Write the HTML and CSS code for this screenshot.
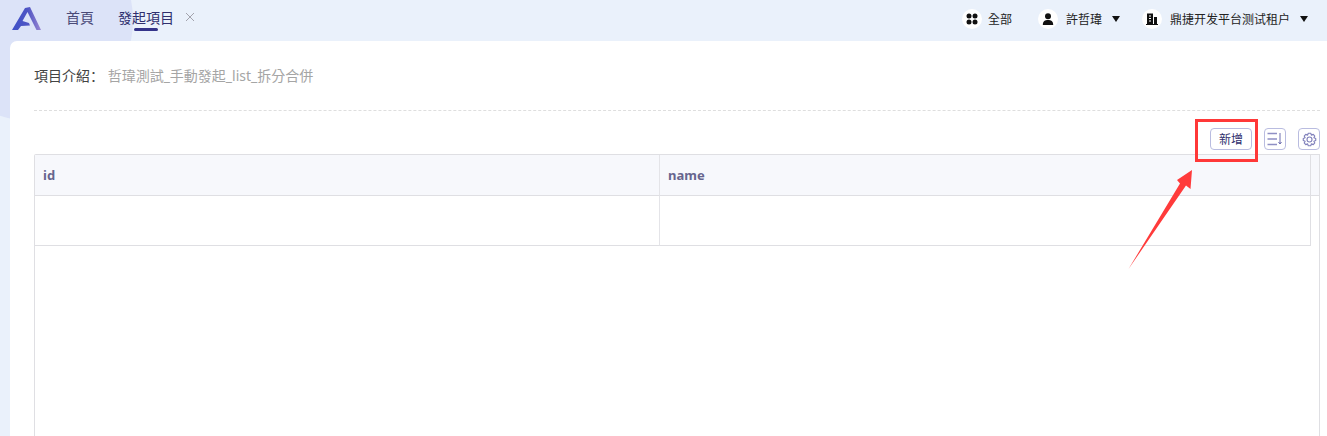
FILE: index.html
```html
<!DOCTYPE html>
<html lang="zh-Hant">
<head>
<meta charset="utf-8">
<title>發起項目</title>
<link rel="stylesheet" href="styles.css">
</head>
<body>
<div class="blob"></div>
<header class="topbar">
  <div class="left">
    <svg class="logo" width="32" height="27" viewBox="0 0 32 27">
      <defs><linearGradient id="lg" x1="0" x2="1" y1="0" y2="0"><stop offset="0" stop-color="#3f51c8"/><stop offset="0.55" stop-color="#4f55c4"/><stop offset="1" stop-color="#9a86d2"/></linearGradient></defs>
      <path d="M2 25 L15 3 L20 2 L31 25 L26.500 25 L17.500 7 L12.500 16 L19 18 L20 20.500 L11 21 L8 25 Z" fill="url(#lg)"/>
    </svg>
    <nav class="tabs">
      <span class="tab">首頁</span>
      <span class="tab active">發起項目</span>
      <svg class="close" width="10" height="10" viewBox="0 0 10 10"><path d="M1 1 L9 9 M9 1 L1 9" stroke="#a3a3ad" stroke-width="1" fill="none"/></svg>
    </nav>
  </div>
  <div class="right">
    <div class="item">
      <span class="circle"><svg width="12" height="12" viewBox="0 0 12 12"><circle cx="3" cy="3" r="2.500"/><circle cx="9" cy="3" r="2.500"/><circle cx="3" cy="9" r="2.500"/><circle cx="9" cy="9" r="2.500"/></svg></span>
      <span class="label">全部</span>
    </div>
    <div class="item user">
      <span class="circle wide"><svg width="12" height="12" viewBox="0 0 12 12"><circle cx="6" cy="3.200" r="3"/><path d="M0.800 12 C0.800 8 3 7 6 7 C9 7 11.200 8 11.200 12 Z"/></svg></span>
      <span class="label">許哲瑋</span><span class="caret"></span>
    </div>
    <div class="item tenant">
      <span class="circle wide"><svg width="12" height="12" viewBox="0 0 12 12"><path d="M1 0.500 H7 V11 H1 Z M8 4 H11 V11 H8 Z" /><path d="M3 3 H5 M3 5.500 H5 M3 8 H5" stroke="#fff" stroke-width="1"/><path d="M0 11.500 H12" stroke="#111" stroke-width="1"/></svg></span>
      <span class="label">鼎捷开发平台测试租户</span><span class="caret"></span>
    </div>
  </div>
</header>
<main class="card">
  <div class="intro">
    <span class="intro-label" lang="zh-Hans">項目介紹：</span>
    <span class="intro-value">哲瑋測試_手動發起_list_拆分合併</span>
  </div>
  <div class="toolbar">
    <button class="add-btn">新增</button>
    <button class="icon-btn"><svg width="16" height="14" viewBox="0 0 16 14"><path d="M0.500 1.500 H10 M0.500 7 H10 M0.500 12.500 H10" stroke="#8f8fc4" stroke-width="1.500" fill="none"/><path d="M13 1 V12 M11.500 10 L13 12 L14.500 10" stroke="#6e6eb0" stroke-width="1" fill="none"/></svg></button>
    <button class="icon-btn"><svg width="15" height="15" viewBox="0 0 24 24" fill="none" stroke="#8080bb" stroke-width="1.800" stroke-linejoin="round"><path d="M10 2 H14 L15 5 L18 3.800 L20.500 6.500 L19 9.300 L22 10.500 V13.500 L19 14.700 L20.500 17.500 L18 20.200 L15 19 L14 22 H10 L9 19 L6 20.200 L3.500 17.500 L5 14.700 L2 13.500 V10.500 L5 9.300 L3.500 6.500 L6 3.800 L9 5 Z"/><circle cx="12" cy="12" r="4"/></svg></button>
  </div>
  <div class="table">
    <div class="grid">
      <div class="th">id</div>
      <div class="th">name</div>
      <div class="td"></div>
      <div class="td"></div>
    </div>
    <div class="gutter"></div>
  </div>
</main>
<div class="red-box"></div>
<svg class="arrow" width="70" height="105" viewBox="0 0 70 105"><path d="M0.500 101 L52 15.500 L49 12 L64 2 L62.500 21 L58 17.500 Z" fill="#ff3b3b"/></svg>
</body>
</html>
```
FILE: styles.css
```css
* { box-sizing: border-box; }
html, body { margin: 0; height: 100%; overflow: hidden; }
body {
  position: relative;
  width: 1327px;
  height: 436px;
  background: #eaf1fb;
  font-family: "Noto Sans", "Noto Sans CJK TC", sans-serif;
  display: flex;
  flex-direction: column;
}
.blob {
  position: absolute;
  left: -69px;
  top: -81px;
  width: 202px;
  height: 202px;
  border-radius: 50%;
  background: #dce3f8;
}
.topbar {
  position: relative;
  height: 41px;
  flex: none;
  display: flex;
  justify-content: space-between;
}
.left { display: flex; align-items: flex-start; }
.logo { margin: 5px 0 0 10px; }
.tabs { display: flex; align-items: flex-start; margin-left: 24px; }
.tab {
  position: relative;
  font-size: 14px;
  line-height: 20px;
  padding-top: 8px;
  color: #4a4a78;
  margin-right: 24px;
}
.tab.active { color: #2f2f6e; margin-right: 0; }
.tab.active::after {
  content: "";
  position: absolute;
  left: 16px;
  top: 28px;
  width: 24px;
  height: 3px;
  border-radius: 2px;
  background: #34348a;
}
.close { margin: 12px 0 0 11px; }
.right {
  display: flex;
  align-items: flex-start;
  padding-top: 9px;
  padding-right: 19px;
  font-size: 12px;
  line-height: 20px;
  color: #222;
}
.item { display: flex; align-items: center; height: 20px; }
.label { padding-top: 1px; }
.user { margin-left: 26px; }
.tenant { margin-left: 22px; }
.circle {
  width: 20px;
  height: 20px;
  border-radius: 50%;
  background: #fff;
  display: flex;
  align-items: center;
  justify-content: center;
  margin-right: 6px;
}
.circle.wide { margin-right: 8px; }
.circle svg { fill: #111; }
.caret {
  width: 0;
  height: 0;
  margin-left: 10px;
  border-left: 4px solid transparent;
  border-right: 4px solid transparent;
  border-top: 6px solid #111;
}
.card {
  position: relative;
  flex: 1;
  margin-left: 10px;
  background: #fff;
  border-top-left-radius: 7px;
  padding: 0 7px 0 24px;
  display: flex;
  flex-direction: column;
  min-height: 0;
}
.intro {
  height: 70px;
  flex: none;
  border-bottom: 1px dashed #dedede;
  padding-top: 24px;
  font-size: 14px;
  line-height: 20px;
}
.intro-label { color: #444; font-family: "Noto Sans CJK SC", sans-serif; }
.intro-value { color: #a5a5a5; }
.toolbar {
  height: 43px;
  flex: none;
  display: flex;
  justify-content: flex-end;
  gap: 12px;
  padding-top: 17px;
}
.add-btn, .icon-btn {
  height: 22px;
  padding: 0;
  background: #fff;
  border: 1px solid #b9bce0;
  border-radius: 4px;
  display: flex;
  align-items: center;
  justify-content: center;
  font-family: inherit;
}
.add-btn {
  width: 42px;
  padding-top: 2px;
  font-size: 12px;
  line-height: 18px;
  color: #2f2f6e;
}
.icon-btn { width: 22px; }
.table {
  flex: 1;
  min-height: 0;
  display: flex;
  border: 1px solid #dfdfe3;
  border-bottom: none;
  border-top-left-radius: 2px;
}
.grid {
  width: 1276px;
  height: 91px;
  flex: none;
  display: grid;
  grid-template-columns: 625px 650px;
  grid-template-rows: 41px 50px;
  border-right: 1px solid #dfdfe3;
}
.th {
  background: #f7f8fc;
  border-bottom: 1px solid #dfdfe3;
  padding-left: 8px;
  font-size: 13px;
  font-weight: 700;
  line-height: 40px;
  color: #67658e;
}
.th:first-child, .td:nth-child(3) { border-right: 1px solid #e4e4e8; }
.td { border-bottom: 1px solid #dfdfe3; }
.gutter { flex: 1; height: 41px; background: #f7f8fc; border-bottom: 1px solid #dfdfe3; }
.red-box {
  position: absolute;
  left: 1195px;
  top: 119px;
  width: 63px;
  height: 43px;
  border: 3px solid #ff3838;
}
.arrow { position: absolute; left: 1128px; top: 168px; }
```
